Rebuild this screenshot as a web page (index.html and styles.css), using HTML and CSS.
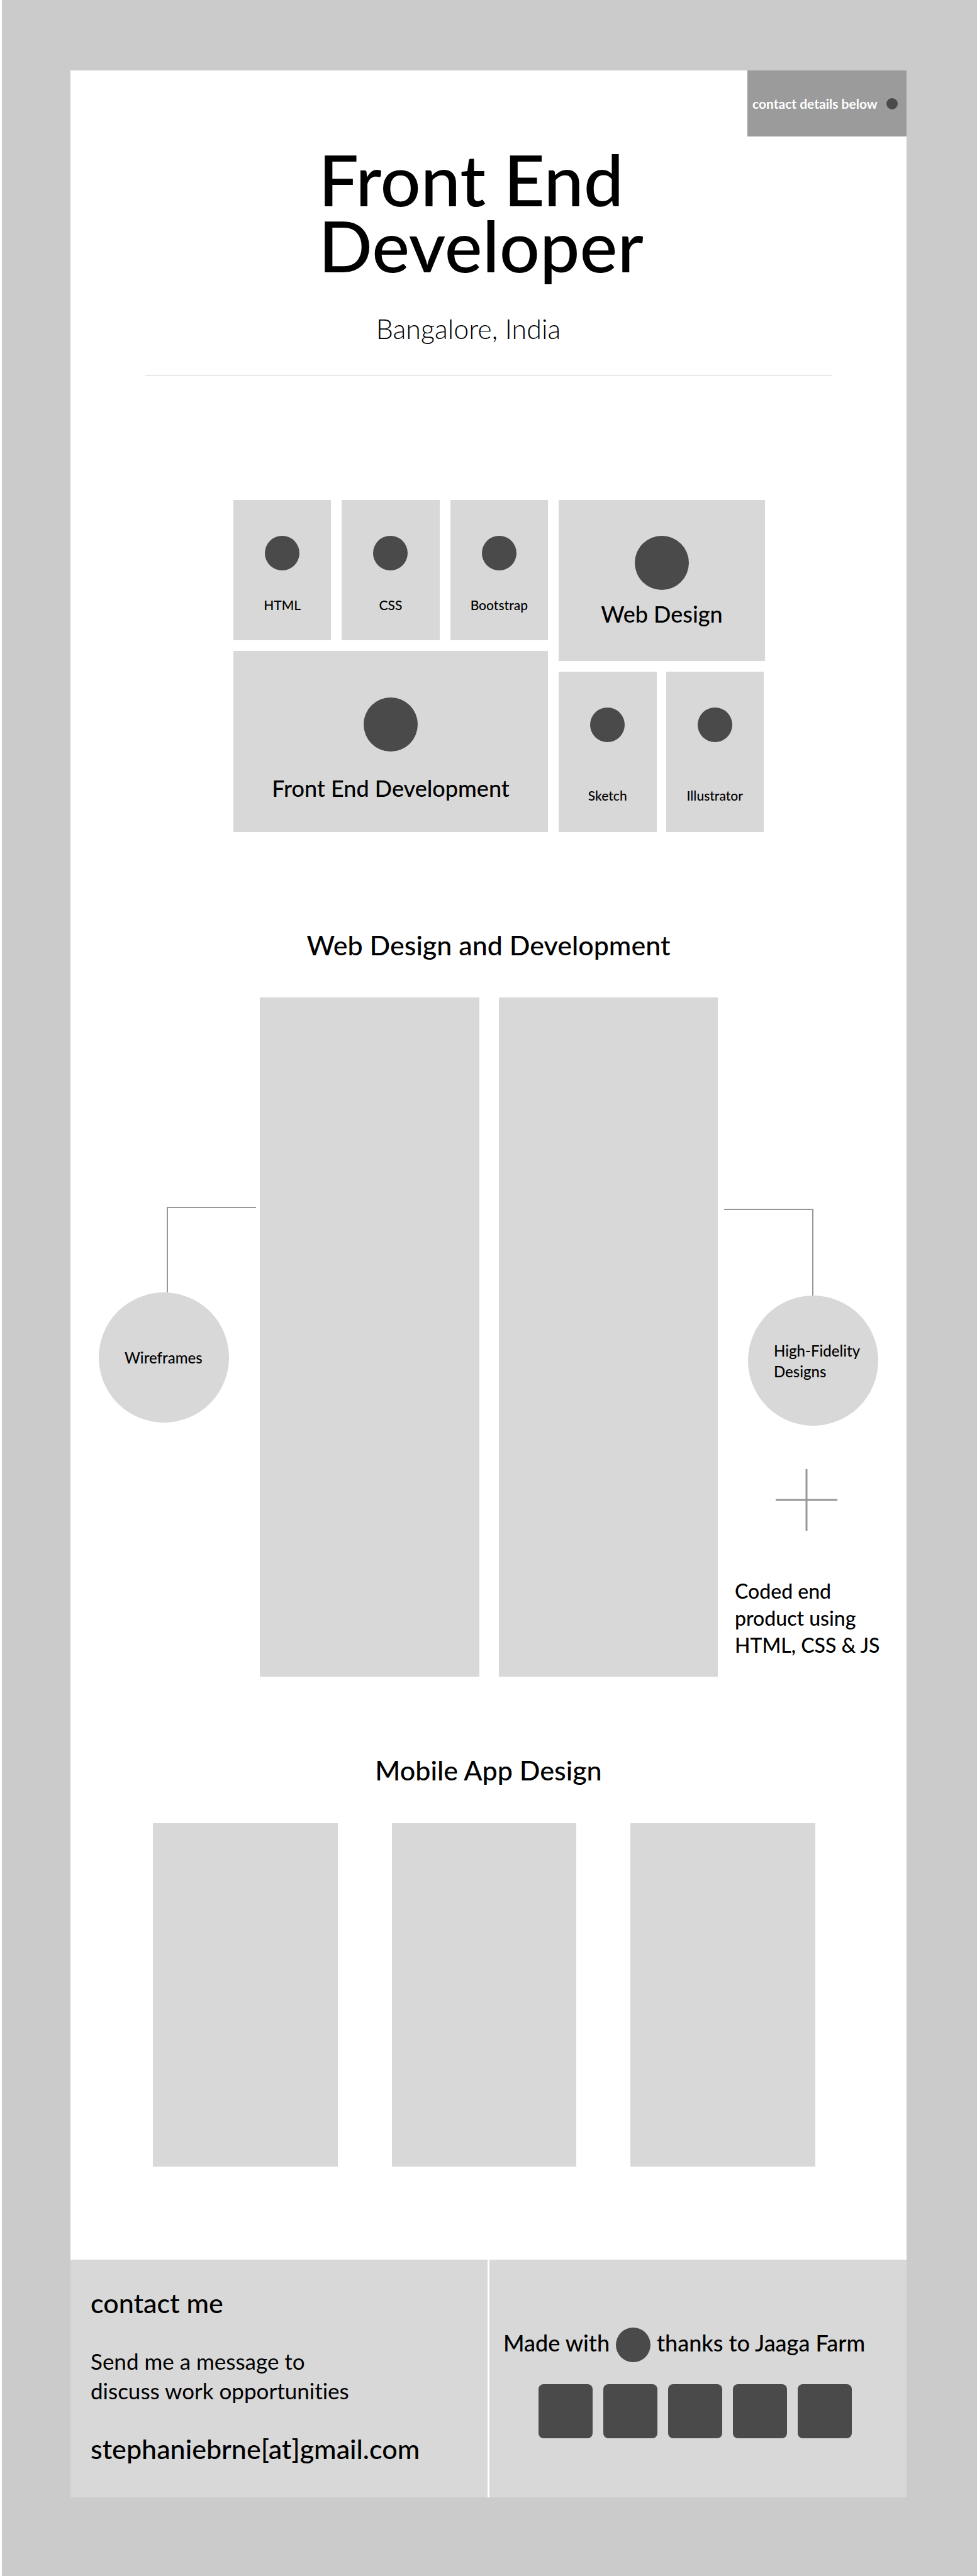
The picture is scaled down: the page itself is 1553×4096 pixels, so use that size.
FILE: index.html
```html
<!DOCTYPE html>
<html lang="en">
<head>
<meta charset="utf-8">
<meta name="viewport" content="width=device-width, initial-scale=1">
<title>Front End Developer</title>
<link rel="stylesheet" href="styles.css">
</head>
<body>
<div class="page">
  <header class="intro">
    <nav class="top-bar">
      <a class="contact-link" href="#contact">contact details below <span class="dot dot-tiny"></span></a>
    </nav>
    <h1 class="title">Front End<br>Developer</h1>
    <p class="location">Bangalore, India</p>
    <hr class="rule">
  </header>
  <main>
    <section class="skills">
      <div class="skills-left">
        <div class="trio">
          <div class="card"><span class="dot"></span><span class="label">HTML</span></div>
          <div class="card"><span class="dot"></span><span class="label">CSS</span></div>
          <div class="card"><span class="dot"></span><span class="label">Bootstrap</span></div>
        </div>
        <div class="card card-development"><span class="dot dot-large"></span><span class="label label-large">Front End Development</span></div>
      </div>
      <div class="skills-right">
        <div class="card card-design"><span class="dot dot-large"></span><span class="label label-large">Web Design</span></div>
        <div class="pair">
          <div class="card card-tall"><span class="dot"></span><span class="label">Sketch</span></div>
          <div class="card card-tall"><span class="dot"></span><span class="label">Illustrator</span></div>
        </div>
      </div>
    </section>
    <section>
      <h2 class="heading">Web Design and Development</h2>
      <div class="showcase">
        <div class="notes-left">
          <div class="connector connector-left"></div>
          <div class="bubble">Wireframes</div>
        </div>
        <div class="columns">
          <div class="column"></div>
          <div class="column"></div>
        </div>
        <div class="notes-right">
          <div class="connector connector-right"></div>
          <div class="bubble">High-Fidelity<br>Designs</div>
          <svg class="plus" width="98" height="98" viewBox="0 0 98 98" aria-hidden="true">
            <path d="M49 0V98M0 49H98" stroke="#979797" stroke-width="3" fill="none"/>
          </svg>
          <p class="coded">Coded end<br>product using<br>HTML, CSS &amp; JS</p>
        </div>
      </div>
    </section>
    <section>
      <h2 class="heading heading-mobile">Mobile App Design</h2>
      <div class="mobile">
        <div class="screen"></div>
        <div class="screen"></div>
        <div class="screen"></div>
      </div>
    </section>
  </main>
  <footer class="footer" id="contact">
    <div class="panel contact">
      <h2 class="contact-title">contact me</h2>
      <p class="message">Send me a message to<br>discuss work opportunities</p>
      <p class="email">stephaniebrne[at]gmail.com</p>
    </div>
    <div class="panel credits">
      <p class="thanks">Made with <span class="dot"></span> thanks to Jaaga Farm</p>
      <div class="tiles">
        <span class="tile"></span>
        <span class="tile"></span>
        <span class="tile"></span>
        <span class="tile"></span>
        <span class="tile"></span>
      </div>
    </div>
  </footer>
</div>
</body>
</html>
```

FILE: styles.css
```css
* { box-sizing: border-box; }

body {
  margin: 0;
  border-left: 3px solid #fff;
  background: #cbcbcb;
  color: #000;
  font-family: Lato, "Liberation Sans", sans-serif;
  font-weight: 500;
  font-variant-ligatures: none;
}

h1, h2, p { margin: 0; font-weight: 500; }

.page {
  margin: 112px 112px 126px 109px;
  background: #fff;
}

.dot {
  flex: none;
  width: 55px;
  height: 55px;
  border-radius: 50%;
  background: #4a4a4a;
}
.dot-large { width: 86px; height: 86px; }
.dot-tiny { width: 18px; height: 18px; }

/* Intro */
.intro { display: flex; flex-direction: column; align-items: center; }
.top-bar { align-self: flex-end; }
.contact-link {
  display: flex;
  align-items: center;
  justify-content: space-between;
  width: 253px;
  height: 105px;
  padding: 0 14px 0 8px;
  background: #9b9b9b;
  color: #fff;
  font-size: 21px;
  font-weight: 700;
  text-decoration: none;
  white-space: nowrap;
}
.title {
  margin-top: 15px;
  padding-right: 24px;
  font-size: 113px;
  line-height: 105px;
}
.location {
  margin-top: 56px;
  padding-right: 64px;
  font-size: 43px;
  font-weight: 300;
  line-height: 50px;
}
.rule {
  align-self: stretch;
  height: 2px;
  margin: 48px 118px 0 119px;
  border: 0;
  background: #e8e8e8;
}

/* Skills */
.skills {
  display: grid;
  grid-template-columns: 500fr 328fr;
  gap: 17px;
  padding: 197px 225px 0 259px;
}
.skills-left, .skills-right { display: flex; flex-direction: column; gap: 17px; }
.trio { display: grid; grid-template-columns: repeat(3, 1fr); gap: 17px; }
.pair { display: grid; grid-template-columns: repeat(2, 1fr); gap: 15px; padding-right: 2px; }
.card {
  display: flex;
  flex-direction: column;
  align-items: center;
  gap: 43px;
  padding: 57px 0 44px;
  background: #d8d8d8;
}
.card-development { gap: 38px; padding: 74px 0 50px; }
.card-design { gap: 18px; padding-bottom: 55px; }
.card-tall { gap: 73px; padding-bottom: 46px; }
.label { font-size: 21px; line-height: 24px; }
.label-large { font-size: 36px; line-height: 40px; }

/* Web design and development */
.heading {
  padding-top: 156px;
  font-size: 43px;
  line-height: 48px;
  text-align: center;
}
.heading-mobile { padding-top: 125px; }
.showcase {
  display: grid;
  grid-template-columns: 301fr 728fr 300fr;
  margin-top: 59px;
}
.columns { display: grid; grid-template-columns: 1fr 1fr; gap: 31px; align-self: start; }
.column { aspect-ratio: 349 / 1082; background: #d8d8d8; }
.connector { border: 0 solid #979797; border-top-width: 2px; }
.connector-left { height: 136px; margin: 333px 6px 0 153px; border-left-width: 2px; }
.connector-right { height: 138px; margin: 336px 148px 0 10px; border-right-width: 2px; }
.bubble {
  display: flex;
  align-items: center;
  width: 207px;
  height: 207px;
  padding-left: 41px;
  border-radius: 50%;
  background: #d8d8d8;
  font-size: 24px;
  line-height: 33px;
  white-space: nowrap;
}
.notes-left .bubble { margin-left: 45px; }
.notes-right .bubble { margin-left: 48px; }
.plus { display: block; margin: 69px 0 74px 92px; }
.coded { padding-left: 27px; font-size: 32px; line-height: 43px; white-space: nowrap; }

/* Mobile app design */
.mobile {
  display: grid;
  grid-template-columns: repeat(3, 1fr);
  gap: 86px;
  padding: 60px 145px 148px 131px;
}
.screen { aspect-ratio: 294 / 546; background: #d8d8d8; }

/* Footer */
.footer { display: grid; grid-template-columns: 1fr 1fr; gap: 3px; }
.panel { background: #d8d8d8; }
.contact { padding: 46px 32px 53px; }
.contact-title { font-size: 43px; line-height: 46px; }
.message { margin-top: 46px; font-size: 35px; font-weight: 400; line-height: 47px; }
.email { margin-top: 45px; font-size: 43px; line-height: 48px; }
.credits { padding: 108px 22px 0; }
.thanks {
  display: flex;
  gap: 10px;
  font-size: 36px;
  line-height: 48px;
  white-space: nowrap;
}
.tiles { display: flex; gap: 17px; margin: 35px 0 0 56px; }
.tile { width: 86px; height: 86px; border-radius: 8px; background: #4a4a4a; }
```
